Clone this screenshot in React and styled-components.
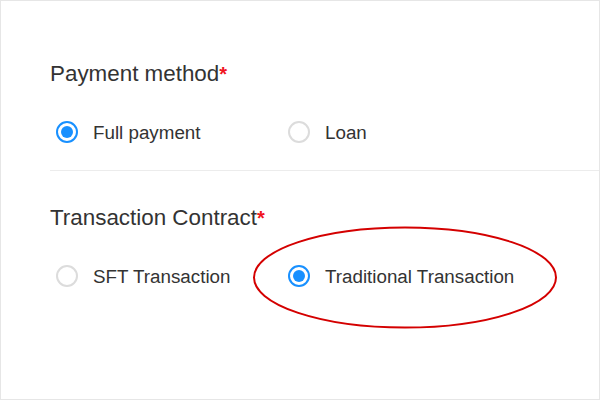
import React from "react";
import styled, { createGlobalStyle } from "styled-components";

const Global = createGlobalStyle`
  html, body { margin: 0; padding: 0; background: #fff; }
  body { font-family: "Liberation Sans", Arial, sans-serif; }
`;

const Page = styled.div`
  position: relative;
  box-sizing: border-box;
  width: 600px;
  height: 400px;
  border: 1px solid #e6e6e6;
  padding: 58px 0 0 49px;
  background: #fff;
  overflow: hidden;
`;

const Section = styled.section`
  display: flex;
  flex-direction: column;
  gap: 29px;
  padding-bottom: ${(p) => (p.$divided ? "28px" : "0")};
  margin-bottom: ${(p) => (p.$divided ? "32px" : "0")};
  border-bottom: ${(p) => (p.$divided ? "1px solid #ececec" : "none")};
`;

const Title = styled.h2`
  margin: 0;
  font-size: 22.4px;
  line-height: 30px;
  font-weight: normal;
  color: #333;
`;

const Required = styled.span`
  color: #f0141e;
  font-weight: bold;
  font-size: 20px;
`;

const RadioGroup = styled.div`
  display: grid;
  grid-template-columns: 232px auto;
  height: 24px;
`;

const Option = styled.label`
  display: flex;
  align-items: center;
  gap: 15px;
  padding-left: 6px;
  font-size: 18.8px;
  line-height: 24px;
  color: #333;
`;

const OptionText = styled.span`
  padding-top: 3px;
`;

const Circle = styled.span`
  box-sizing: border-box;
  width: 22px;
  height: 22px;
  border-radius: 50%;
  border: 2px solid ${(p) => (p.$checked ? "#1890ff" : "#dcdcdc")};
  display: flex;
  align-items: center;
  justify-content: center;
  flex: none;
  &::after {
    content: "";
    width: 12px;
    height: 12px;
    border-radius: 50%;
    background: ${(p) => (p.$checked ? "#1890ff" : "transparent")};
  }
`;

const Highlight = styled.svg`
  position: absolute;
  left: 252px;
  top: 225px;
  overflow: visible;
`;

function Radio({ checked, children }) {
  return (
    <Option>
      <Circle $checked={checked} />
      <OptionText>{children}</OptionText>
    </Option>
  );
}

export default function App() {
  return (
    <Page>
      <Global />
      <Section $divided>
        <Title>
          Payment method<Required>*</Required>
        </Title>
        <RadioGroup>
          <Radio checked>Full payment</Radio>
          <Radio>Loan</Radio>
        </RadioGroup>
      </Section>
      <Section>
        <Title>
          Transaction Contract<Required>*</Required>
        </Title>
        <RadioGroup>
          <Radio>SFT Transaction</Radio>
          <Radio checked>Traditional Transaction</Radio>
        </RadioGroup>
      </Section>
      <Highlight width="304" height="103" viewBox="0 0 304 103">
        <ellipse cx="152" cy="51.5" rx="151" ry="50" fill="none" stroke="#d40000" strokeWidth="2" />
      </Highlight>
    </Page>
  );
}
